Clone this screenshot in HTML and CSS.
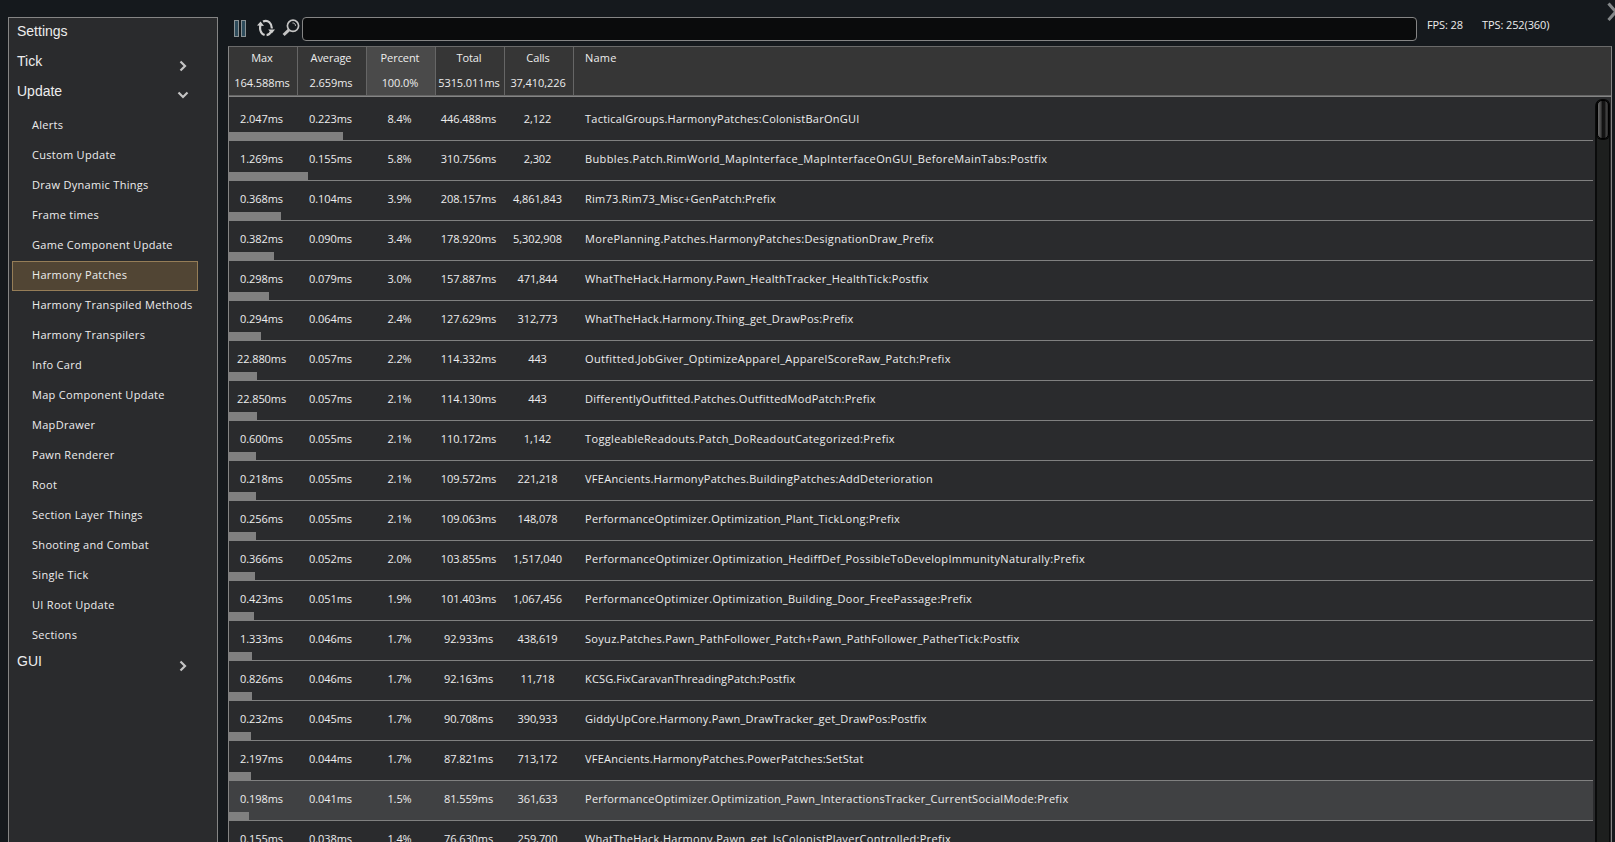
FILE: index.html
```html
<!DOCTYPE html>
<html>
<head>
    <meta charset="utf-8">
    <title>Analyzer</title>
    <link rel="stylesheet" href="styles.css">
</head>
<body>
    <div class="window">
        <div class="sidebar">
            <div class="tab">Settings</div>
            <div class="tab">Tick
                <svg class="arrow" width="10" height="14" viewBox="0 0 10 14"><path d="M2.5 2.5 L7 7 L2.5 11.5"/></svg>
            </div>
            <div class="tab">Update
                <svg class="arrow down" width="14" height="10" viewBox="0 0 14 10"><path d="M2.5 2.5 L7 7 L11.5 2.5"/></svg>
            </div>
            <div class="entries" id="entries"></div>
            <div class="tab">GUI
                <svg class="arrow" width="10" height="14" viewBox="0 0 10 14"><path d="M2.5 2.5 L7 7 L2.5 11.5"/></svg>
            </div>
        </div>
        <div class="main">
            <div class="toolbar">
                <svg class="pause" width="13" height="17" viewBox="0 0 13 17">
                    <rect x="0.5" y="0.5" width="4" height="16"/>
                    <rect x="7.5" y="0.5" width="4" height="16"/>
                </svg>
                <svg class="refresh" width="18" height="18" viewBox="0 0 18 18">
                    <path d="M7.6 16 C3.2 14.6 2.4 9.5 3.6 5.6 M6 2.6 C11 .2 15 4.5 14.8 9.5 M14 12.4 C13 15 11.4 16 9.6 16.2"/>
                    <path class="head" d="M0 6.6 L3.6 2.6 L7 7 Z M11.2 10.6 L18 10.4 L14.8 14.6 Z"/>
                </svg>
                <svg class="search" width="18" height="18" viewBox="0 0 18 18">
                    <circle cx="11" cy="6.8" r="5.6"/>
                    <path class="handle" d="M7 10.8 L1.6 16"/>
                    <path class="shine" d="M10.5 4 C12.2 3.8 13.5 5 13.5 6.8"/>
                </svg>
                <input class="filter" type="text">
                <span class="fps">FPS: 28</span>
                <span class="tps">TPS: 252(360)</span>
            </div>
            <div class="profiler">
                <div class="header">
                    <div class="col"><span>Max</span><span>164.588ms</span></div>
                    <div class="col"><span>Average</span><span>2.659ms</span></div>
                    <div class="col sorted"><span>Percent</span><span>100.0%</span></div>
                    <div class="col"><span>Total</span><span>5315.011ms</span></div>
                    <div class="col"><span>Calls</span><span>37,410,226</span></div>
                    <div class="col name"><span>Name</span></div>
                </div>
                <div class="body">
                    <div class="rows" id="rows"></div>
                    <div class="scrollbar"><div class="thumb"></div></div>
                </div>
            </div>
        </div>
        <svg class="close" width="18" height="20" viewBox="0 0 18 20"><path d="M1.5 1.5 L16 18 M16 1.5 L1.5 18"/></svg>
    </div>
    <script src="script.js"></script>
</body>
</html>
```
FILE: styles.css
```css
* {
    box-sizing: border-box;
}

body {
    margin: 0;
    background-color: #15191d;
    color: #ededed;
    font-family: "Open Sans", "Noto Sans", sans-serif;
    font-size: 11px;
}

.window {
    position: relative;
    display: flex;
    height: 842px;
    padding: 17px 3px 0 8px;
    overflow: hidden;
}

/* left menu */
.sidebar {
    width: 210px;
    height: 840px;
    flex: none;
    padding: 0 19px 0 3px;
    background-color: #2a2b2d;
    border: 1px solid #858585;
}

.tab {
    display: flex;
    justify-content: space-between;
    height: 30px;
    padding: 6px 10px 0 5px;
    font-family: "Liberation Sans", Arial, sans-serif;
    font-size: 14px;
    line-height: 16px;
}

.tab:first-child {
    height: 29px;
    padding-top: 5px;
}

.arrow {
    margin-top: 6px;
    fill: none;
    stroke: #c4c4c4;
    stroke-width: 2.2;
}

.arrow.down {
    margin: 7px -2px 0 0;
}

.entries {
    margin: 4px 0 -4px;
}

.entry {
    height: 30px;
    padding-left: 19px;
    border: 1px solid transparent;
    line-height: 26px;
    letter-spacing: 0.3px;
    white-space: nowrap;
}

.entry.active {
    background-color: #514534;
    border-color: #957d57;
}

/* right side */
.main {
    flex: 1;
    min-width: 0;
    margin-left: 10px;
}

.toolbar {
    display: flex;
    height: 29px;
}

.pause {
    margin: 3px 0 0 6px;
    fill: #2e4c5c;
    stroke: #8b9396;
}

.refresh {
    margin: 2px 0 0 10px;
    fill: none;
    stroke: #cfcfcf;
    stroke-width: 2.2;
}

.refresh .head {
    fill: #cfcfcf;
    stroke: none;
}

.search {
    margin: 2px 0 0 7px;
    fill: none;
    stroke: #c4c4c4;
    stroke-width: 1.7;
}

.search .handle {
    stroke-width: 3;
}

.search .shine {
    stroke-width: 1;
}

.filter {
    width: 1115px;
    height: 24px;
    margin-left: 2px;
    padding: 0 6px;
    background-color: #0a0b0c;
    border: 1px solid #858585;
    border-radius: 4px;
    color: inherit;
    outline: none;
}

.fps,
.tps {
    line-height: 16px;
    letter-spacing: -0.1px;
    white-space: nowrap;
}

.fps {
    width: 55px;
    margin-left: 10px;
}

.profiler {
    height: 800px;
    background-color: #2a2b2d;
    border: 1px solid #858585;
    border-top-color: #6a6a6a;
}

.header {
    display: flex;
    height: 50px;
    background-color: #363636;
    border-bottom: 1px solid #858585;
}

.col {
    display: flex;
    flex-direction: column;
    align-items: center;
    width: 69px;
    padding: 2px 2px 0 0;
    border-right: 1px solid #666;
    border-bottom: 1px solid #666;
    line-height: 17px;
    letter-spacing: -0.08px;
    white-space: nowrap;
}

.col span + span {
    margin-top: 8px;
}

.col.sorted {
    background-color: #4a4a4a;
}

.col.name {
    flex: 1;
    align-items: flex-start;
    padding-left: 11px;
    border-right: none;
    letter-spacing: 0.2px;
}

.body {
    display: flex;
    justify-content: space-between;
}

.rows {
    width: 1365px;
    margin-left: -1px;
    padding-top: 4px;
}

.row {
    position: relative;
    display: flex;
    height: 40px;
    padding-left: 1px;
    border-bottom: 1px solid #808080;
    line-height: 36px;
    white-space: nowrap;
}

.row.hover {
    background: linear-gradient(to right, transparent 1px, #404143 1px);
}

.cell {
    width: 69px;
    padding-right: 4px;
    letter-spacing: -0.08px;
    text-align: center;
}

.cell.label {
    flex: 1;
    padding-left: 11px;
    letter-spacing: inherit;
    text-align: left;
}

/* share of the frame, drawn along the bottom of the row */
.bar {
    position: absolute;
    left: 0;
    bottom: 0;
    height: 8px;
    background-color: #808080;
}

.scrollbar {
    width: 15px;
    height: 760px;
    margin: 3px 1px 0 0;
    background-color: #1d1f1e;
    border: 1px solid #0a0b0b;
    border-width: 0 1px 0 2px;
    border-radius: 6px 6px 0 0;
}

.thumb {
    width: 12px;
    height: 39px;
    border: 1px solid #000;
    border-radius: 5px;
    box-shadow: 0 0 0 1px #050505;
    background: linear-gradient(to right, #6a6a6a, #3c3c3c 32%, #111 42%, #151515 70%, #444 80%, #2c2c2c);
}

.close {
    position: absolute;
    left: 1607px;
    top: 2px;
    stroke: #85888a;
    stroke-width: 3;
}
```
FILE: script.js
```js
const entries = [
    'Alerts', 'Custom Update', 'Draw Dynamic Things', 'Frame times', 'Game Component Update',
    'Harmony Patches', 'Harmony Transpiled Methods', 'Harmony Transpilers', 'Info Card',
    'Map Component Update', 'MapDrawer', 'Pawn Renderer', 'Root', 'Section Layer Things',
    'Shooting and Combat', 'Single Tick', 'UI Root Update', 'Sections'
];

// max, average, percent, total, calls, name, bar width, name tracking
const logs = [
    ['2.047ms', '0.223ms', '8.4%', '446.488ms', '2,122', 'TacticalGroups.HarmonyPatches:ColonistBarOnGUI', 115, 0.24],
    ['1.269ms', '0.155ms', '5.8%', '310.756ms', '2,302', 'Bubbles.Patch.RimWorld_MapInterface_MapInterfaceOnGUI_BeforeMainTabs:Postfix', 80, 0.38],
    ['0.368ms', '0.104ms', '3.9%', '208.157ms', '4,861,843', 'Rim73.Rim73_Misc+GenPatch:Prefix', 53, 0.22],
    ['0.382ms', '0.090ms', '3.4%', '178.920ms', '5,302,908', 'MorePlanning.Patches.HarmonyPatches:DesignationDraw_Prefix', 46, 0.31],
    ['0.298ms', '0.079ms', '3.0%', '157.887ms', '471,844', 'WhatTheHack.Harmony.Pawn_HealthTracker_HealthTick:Postfix', 41, 0.31],
    ['0.294ms', '0.064ms', '2.4%', '127.629ms', '312,773', 'WhatTheHack.Harmony.Thing_get_DrawPos:Prefix', 33, 0.27],
    ['22.880ms', '0.057ms', '2.2%', '114.332ms', '443', 'Outfitted.JobGiver_OptimizeApparel_ApparelScoreRaw_Patch:Prefix', 29, 0.34],
    ['22.850ms', '0.057ms', '2.1%', '114.130ms', '443', 'DifferentlyOutfitted.Patches.OutfittedModPatch:Prefix', 29, 0.26],
    ['0.600ms', '0.055ms', '2.1%', '110.172ms', '1,142', 'ToggleableReadouts.Patch_DoReadoutCategorized:Prefix', 28, 0.36],
    ['0.218ms', '0.055ms', '2.1%', '109.572ms', '221,218', 'VFEAncients.HarmonyPatches.BuildingPatches:AddDeterioration', 28, 0.31],
    ['0.256ms', '0.055ms', '2.1%', '109.063ms', '148,078', 'PerformanceOptimizer.Optimization_Plant_TickLong:Prefix', 28, 0.28],
    ['0.366ms', '0.052ms', '2.0%', '103.855ms', '1,517,040', 'PerformanceOptimizer.Optimization_HediffDef_PossibleToDevelopImmunityNaturally:Prefix', 27, 0.35],
    ['0.423ms', '0.051ms', '1.9%', '101.403ms', '1,067,456', 'PerformanceOptimizer.Optimization_Building_Door_FreePassage:Prefix', 26, 0.34],
    ['1.333ms', '0.046ms', '1.7%', '92.933ms', '438,619', 'Soyuz.Patches.Pawn_PathFollower_Patch+Pawn_PathFollower_PatherTick:Postfix', 24, 0.31],
    ['0.826ms', '0.046ms', '1.7%', '92.163ms', '11,718', 'KCSG.FixCaravanThreadingPatch:Postfix', 24, 0.15],
    ['0.232ms', '0.045ms', '1.7%', '90.708ms', '390,933', 'GiddyUpCore.Harmony.Pawn_DrawTracker_get_DrawPos:Postfix', 23, 0.22],
    ['2.197ms', '0.044ms', '1.7%', '87.821ms', '713,172', 'VFEAncients.HarmonyPatches.PowerPatches:SetStat', 23, 0.24],
    ['0.198ms', '0.041ms', '1.5%', '81.559ms', '361,633', 'PerformanceOptimizer.Optimization_Pawn_InteractionsTracker_CurrentSocialMode:Prefix', 21, 0.29],
    ['0.155ms', '0.038ms', '1.4%', '76.630ms', '259,700', 'WhatTheHack.Harmony.Pawn_get_IsColonistPlayerControlled:Prefix', 19, 0.32]
];

const hovered = 17;

document.getElementById('entries').innerHTML = entries.map(name =>
    `<div class="entry${name === 'Harmony Patches' ? ' active' : ''}">${name}</div>`
).join('');

document.getElementById('rows').innerHTML = logs.map((log, i) => `
    <div class="row${i === hovered ? ' hover' : ''}">
        ${log.slice(0, 5).map(value => `<div class="cell">${value}</div>`).join('')}
        <div class="cell label" style="letter-spacing: ${log[7]}px">${log[5]}</div>
        <div class="bar" style="width: ${log[6]}px"></div>
    </div>`
).join('');
```
